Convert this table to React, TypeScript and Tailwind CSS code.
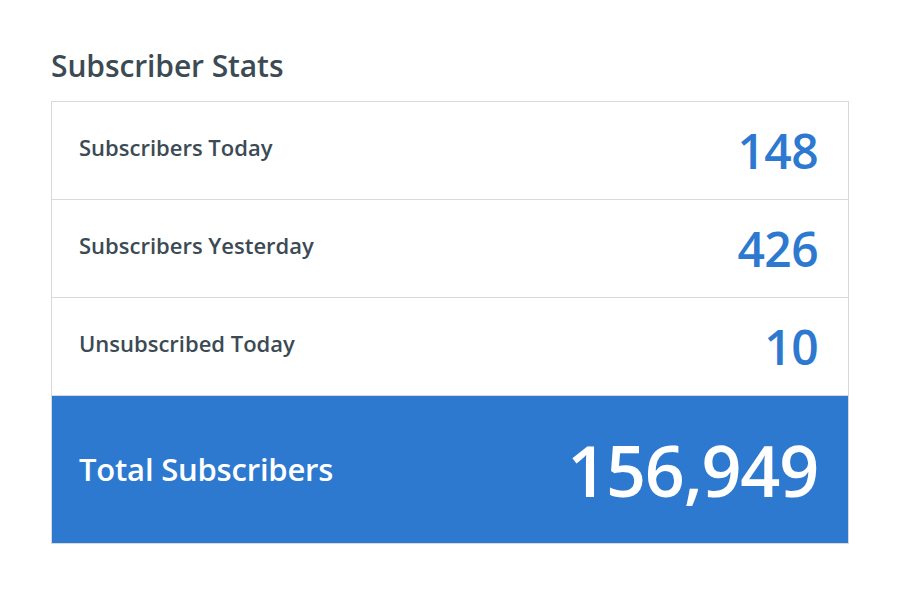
import React from "react";

const rows = [
  { label: "Subscribers Today", value: "148" },
  { label: "Subscribers Yesterday", value: "426" },
  { label: "Unsubscribed Today", value: "10" },
];

export default function App() {
  return (
    <div
      className="w-[900px] h-[597px] bg-white pt-[46px] px-[51px]"
      style={{ fontFamily: '"Open Sans", "Noto Sans", sans-serif' }}
    >
      <h1 className="text-[30px] leading-[40px] font-semibold text-[#3c4a53] mb-[15px] tracking-[-0.1px]">
        Subscriber Stats
      </h1>
      <div className="w-[798px] border border-[#d9d9d9]">
        {rows.map((r) => (
          <div
            key={r.label}
            className="h-[98px] border-b border-[#d9d9d9] flex items-center justify-between pl-[27px] pr-[30px]"
          >
            <span className="text-[22px] font-semibold text-[#3b4a54] -mt-[6px]">
              {r.label}
            </span>
            <span className="text-[48px] font-[650] text-[#2e79d0] leading-none tracking-[-0.6px]">
              {r.value}
            </span>
          </div>
        ))}
        <div className="h-[147px] bg-[#2e79d0] flex items-center justify-between pl-[27px] pr-[30px]">
          <span className="text-[31px] font-semibold text-white tracking-[-0.2px]">
            Total Subscribers
          </span>
          <span className="text-[70px] font-[650] text-white leading-none tracking-[-1.2px]">
            156,949
          </span>
        </div>
      </div>
    </div>
  );
}
